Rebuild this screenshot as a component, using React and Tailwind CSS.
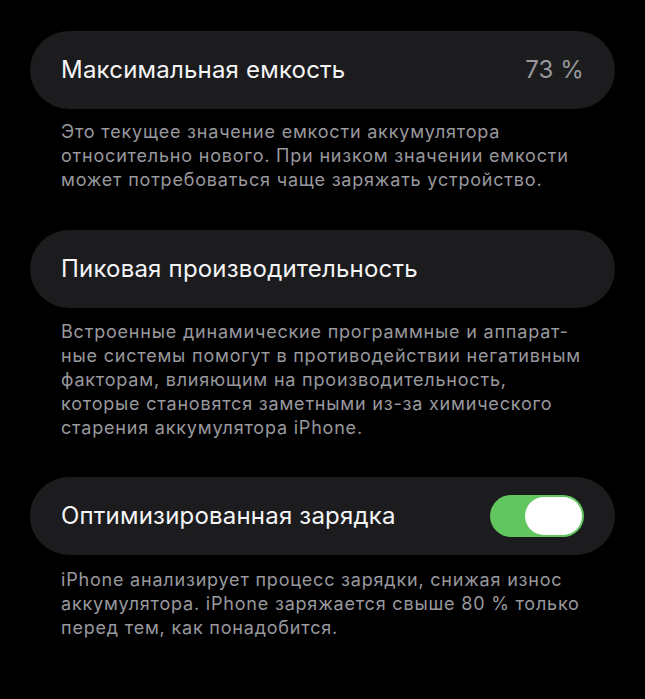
import React from "react";

const font = { fontFamily: "Inter, 'Noto Sans', sans-serif" };

function Card({ children }) {
  return (
    <div className="h-[78px] rounded-full bg-[#1c1c1e] pl-[31px] pr-[31px] flex items-center justify-between">
      {children}
    </div>
  );
}

function Desc({ lines, className = "" }) {
  return (
    <div className={"pl-[31px] text-[18px] leading-[24px] tracking-[0.8px] text-[#98989d] " + className}>
      {lines.map((l, i) => (
        <div key={i} className="whitespace-nowrap">{l}</div>
      ))}
    </div>
  );
}

export default function App() {
  return (
    <div className="w-[645px] h-[699px] bg-black overflow-hidden pt-[31px] px-[30px]" style={font}>
      <Card>
        <span className="text-[24px] text-[#f5f5f7] tracking-[0.2px]">Максимальная емкость</span>
        <span className="text-[24px] text-[#98989d] tracking-[0.1px]">73 %</span>
      </Card>
      <Desc
        className="mt-[11px]"
        lines={[
          "Это текущее значение емкости аккумулятора",
          "относительно нового. При низком значении емкости",
          "может потребоваться чаще заряжать устройство.",
        ]}
      />
      <div className="mt-[38px]">
        <Card>
          <span className="text-[24px] text-[#f5f5f7] tracking-[0.2px]">Пиковая производительность</span>
        </Card>
      </div>
      <Desc
        className="mt-[12px]"
        lines={[
          "Встроенные динамические программные и аппарат-",
          "ные системы помогут в противодействии негативным",
          "факторам, влияющим на производительность,",
          "которые становятся заметными из-за химического",
          "старения аккумулятора iPhone.",
        ]}
      />
      <div className="mt-[37px]">
        <Card>
          <span className="text-[24px] text-[#f5f5f7] tracking-[0.2px]">Оптимизированная зарядка</span>
          <div className="w-[94px] h-[42px] rounded-full bg-[#62c660] flex items-center justify-end pr-[2px]">
            <div className="w-[57px] h-[38px] rounded-full bg-white" />
          </div>
        </Card>
      </div>
      <Desc
        className="mt-[13px]"
        lines={[
          "iPhone анализирует процесс зарядки, снижая износ",
          "аккумулятора. iPhone заряжается свыше 80 % только",
          "перед тем, как понадобится.",
        ]}
      />
    </div>
  );
}
